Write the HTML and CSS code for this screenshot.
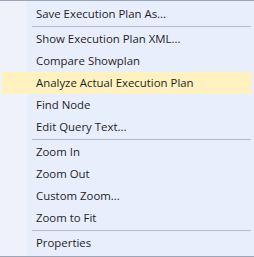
FILE: index.html
```html
<!DOCTYPE html>
<html>
<head>
<meta charset="utf-8">
<link rel="stylesheet" href="styles.css">
</head>
<body>
<div class="menu">
  <div class="item">Save Execution Plan As...</div>
  <div class="sep"></div>
  <div class="item">Show Execution Plan XML...</div>
  <div class="item">Compare Showplan</div>
  <div class="item active">Analyze Actual Execution Plan</div>
  <div class="item">Find Node</div>
  <div class="item">Edit Query Text...</div>
  <div class="sep"></div>
  <div class="item">Zoom In</div>
  <div class="item">Zoom Out</div>
  <div class="item">Custom Zoom...</div>
  <div class="item">Zoom to Fit</div>
  <div class="sep"></div>
  <div class="item">Properties</div>
</div>
</body>
</html>
```
FILE: styles.css
```css
html, body {
  margin: 0;
  padding: 0;
  background: #e9eefd;
}
.menu {
  width: 254px;
  height: 257px;
  box-sizing: border-box;
  border-top: 1px solid #9ba7b9;
  border-bottom: 1px solid #9ba7b9;
  padding: 2px 0 2px 0;
  background: linear-gradient(to right, #f0f2fb 27px, #e9eefd 27px);
  font-family: "Open Sans", "Noto Sans", sans-serif;
  font-size: 11.4px;
  color: #1e1e1e;
  display: flex;
  flex-direction: column;
}
.item {
  height: 22px;
  line-height: 22px;
  margin: 0 2px;
  padding-left: 34px;
  white-space: nowrap;
}
.item.active {
  background: #fff2c0;
}
.sep {
  height: 1px;
  margin: 1px 3px 1px 32px;
  background: #b7bac8;
}
```
